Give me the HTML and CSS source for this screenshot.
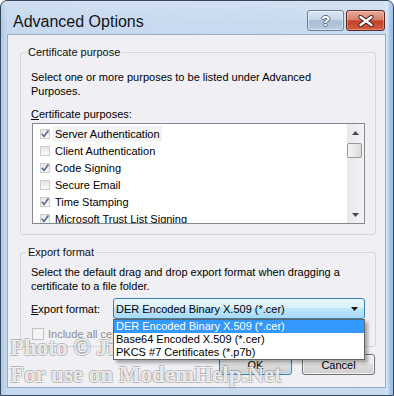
FILE: index.html
```html
<!DOCTYPE html>
<html>
<head>
<meta charset="utf-8">
<title>Advanced Options</title>
<link rel="stylesheet" href="styles.css">
</head>
<body>
<div class="window">
  <div class="titlebar">
    <div class="title">Advanced Options</div>
    <div class="caption-buttons">
      <div class="cap-btn help"><span class="help-glyph">?</span></div>
      <div class="cap-btn close">
        <svg width="16" height="12" viewBox="0 0 16 12"><path d="M2.5 2 L13.5 10 M13.5 2 L2.5 10" stroke="#3d1b15" stroke-width="4.2" stroke-linecap="round"/><path d="M2.5 2 L13.5 10 M13.5 2 L2.5 10" stroke="#ffffff" stroke-width="2.4" stroke-linecap="round"/></svg>
      </div>
    </div>
  </div>
  <div class="client">
    <fieldset class="group group-purpose">
      <legend>Certificate purpose</legend>
      <p class="desc">Select one or more purposes to be listed under Advanced<br>Purposes.</p>
      <div class="label"><u>C</u>ertificate purposes:</div>
      <div class="listbox">
        <ul class="items">
          <li class="item"><span class="cb"><svg width="10" height="10" viewBox="0 0 10 10"><path d="M1.8 4.8 L4 7.4 L8.4 1.6" fill="none" stroke="#566a8e" stroke-width="1.6"/></svg></span><span class="item-text focus">Server Authentication</span></li>
          <li class="item"><span class="cb"></span><span class="item-text">Client Authentication</span></li>
          <li class="item"><span class="cb"><svg width="10" height="10" viewBox="0 0 10 10"><path d="M1.8 4.8 L4 7.4 L8.4 1.6" fill="none" stroke="#566a8e" stroke-width="1.6"/></svg></span><span class="item-text">Code Signing</span></li>
          <li class="item"><span class="cb"></span><span class="item-text">Secure Email</span></li>
          <li class="item"><span class="cb"><svg width="10" height="10" viewBox="0 0 10 10"><path d="M1.8 4.8 L4 7.4 L8.4 1.6" fill="none" stroke="#566a8e" stroke-width="1.6"/></svg></span><span class="item-text">Time Stamping</span></li>
          <li class="item"><span class="cb"><svg width="10" height="10" viewBox="0 0 10 10"><path d="M1.8 4.8 L4 7.4 L8.4 1.6" fill="none" stroke="#566a8e" stroke-width="1.6"/></svg></span><span class="item-text">Microsoft Trust List Signing</span></li>
          <li class="item"><span class="cb"></span><span class="item-text">Encrypting File System</span></li>
        </ul>
        <div class="scrollbar">
          <div class="sb-btn"><svg width="7" height="4" viewBox="0 0 7 4"><path d="M0 4 L3.5 0 L7 4 Z" fill="#4a4a4a"/></svg></div>
          <div class="sb-track"><div class="sb-thumb"></div></div>
          <div class="sb-btn"><svg width="7" height="4" viewBox="0 0 7 4"><path d="M0 0 L7 0 L3.5 4 Z" fill="#4a4a4a"/></svg></div>
        </div>
      </div>
    </fieldset>
    <fieldset class="group group-export">
      <legend>Export format</legend>
      <p class="desc">Select the default drag and drop export format when dragging a<br>certificate to a file folder.</p>
      <div class="format-row">
        <span class="format-label"><u>E</u>xport format:</span>
        <div class="combo-wrap">
          <div class="combo">
            <span>DER Encoded Binary X.509 (*.cer)</span>
            <svg width="7" height="4" viewBox="0 0 7 4"><path d="M0 0 L7 0 L3.5 4 Z" fill="#111"/></svg>
          </div>
          <ul class="dropdown">
            <li class="sel">DER Encoded Binary X.509 (*.cer)</li>
            <li>Base64 Encoded X.509 (*.cer)</li>
            <li>PKCS #7 Certificates (*.p7b)</li>
          </ul>
        </div>
      </div>
      <div class="include-row"><span class="cb-disabled"></span><span>Include all certificates in the certification path if possible</span></div>
    </fieldset>
    <div class="buttons">
      <button class="btn default">OK</button>
      <button class="btn">Cancel</button>
    </div>
  </div>
  <div class="watermark">Photo © Jim<br>For use on ModemHelp.Net</div>
</div>
</body>
</html>
```

FILE: styles.css
```css
* { box-sizing: border-box; }
html, body { margin: 0; padding: 0; background: #ffffff; }
body {
  font-family: "Liberation Sans", Arial, sans-serif;
  font-size: 11px;
  color: #000;
}
.window {
  position: relative;
  width: 394px;
  height: 396px;
  border: 1px solid #34465c;
  border-radius: 7px 7px 0 0;
  background: linear-gradient(to right, #b0c8e2 0px, #c6d9ee 6px, #c9dbef 383px, #d4e4f5 386px, #a6c5e9 389px, #9cbce2 392px);
  display: flex;
  flex-direction: column;
  overflow: hidden;
}
.titlebar {
  flex: 0 0 33px;
  height: 33px;
  display: flex;
  justify-content: space-between;
  align-items: flex-start;
  padding: 0 8px 0 12px;
  background: linear-gradient(rgba(255,255,255,0.18), rgba(255,255,255,0) 70%);
}
.title {
  font-family: "Liberation Sans", Arial, sans-serif;
  font-size: 16px;
  line-height: 20px;
  margin-top: 11px;
  color: #141414;
}
.caption-buttons {
  display: flex;
  gap: 2px;
  margin-top: 9px;
}
.cap-btn {
  height: 21px;
  border-radius: 3px;
  display: flex;
  align-items: center;
  justify-content: center;
}
.help {
  width: 37px;
  border: 1px solid #6d7e92;
  background: linear-gradient(#dce7f3 0%, #c7d6e7 45%, #a9bed6 52%, #b9cce1 100%);
  box-shadow: inset 0 0 0 1px rgba(255,255,255,0.45);
}
.help-glyph {
  font-family: "Liberation Sans", Arial, sans-serif;
  font-weight: bold;
  font-size: 15px;
  line-height: 15px;
  color: #ffffff;
  text-shadow: 1px 0 0 #5d6c7e, -1px 0 0 #5d6c7e, 0 1px 0 #5d6c7e, 0 -1px 0 #5d6c7e;
}
.close {
  width: 39px;
  border: 1px solid #5a2a22;
  background: linear-gradient(#eaa999 0%, #d9826d 45%, #c2442c 52%, #d15a40 100%);
  box-shadow: inset 0 0 0 1px rgba(255,255,255,0.3);
}
.close svg { display: block; }

.client {
  flex: 1;
  margin: 0 7px 7px 6px;
  border: 1px solid #98acc3;
  background: #f0eff3;
  padding: 0 9px 0 12px;
  display: flex;
  flex-direction: column;
}
.group {
  margin: 10px 0 0 0;
  border: 1px solid #d3d7dd;
  border-radius: 3px;
  min-width: 0;
}
.group legend {
  padding: 0 2px;
  margin-left: -5px;
  line-height: 14px;
  color: #111;
}
.group-purpose { padding: 11px 10px 10px 10px; }
.group-export { padding: 6px 10px 5px 10px; }
.desc {
  margin: 0;
  line-height: 14px;
}
.label {
  margin-top: 9px;
  line-height: 14px;
}
.listbox {
  margin: 2px 0 0 1px;
  height: 101px;
  border: 1px solid #828790;
  background: #ffffff;
  display: flex;
}
.items {
  list-style: none;
  margin: 0;
  padding: 1px 0 0 7px;
  flex: 1;
  overflow: hidden;
}
.item {
  height: 17px;
  display: flex;
  align-items: center;
  white-space: nowrap;
}
.cb {
  width: 10px;
  height: 10px;
  flex: 0 0 10px;
  border: 1px solid #cdcdcd;
  background: linear-gradient(#e6e6e6, #fafafa);
  display: flex;
  align-items: center;
  justify-content: center;
}
.cb svg { display: block; flex: 0 0 10px; }
.item-text {
  margin-left: 3px;
  padding: 1px 2px;
  line-height: 14px;
}
.item-text.focus { background: #f3f3f4; }
.scrollbar {
  width: 17px;
  flex: 0 0 17px;
  display: flex;
  flex-direction: column;
  background: linear-gradient(to right, #e8e8ea, #f4f4f5);
}
.sb-btn {
  height: 17px;
  flex: 0 0 17px;
  display: flex;
  align-items: center;
  justify-content: center;
}
.sb-btn svg { display: block; }
.sb-track { flex: 1; padding-top: 2px; }
.sb-thumb {
  width: 15px;
  height: 15px;
  border: 1px solid #979797;
  border-radius: 2px;
  background: linear-gradient(to right, #f5f5f5, #dcdcdc);
}
.format-row {
  margin-top: 5px;
  display: flex;
  align-items: center;
}
.format-label {
  flex: 0 0 82px;
  line-height: 14px;
}
.combo-wrap {
  position: relative;
  flex: 0 0 252px;
  width: 252px;
}
.combo {
  height: 21px;
  border: 1px solid #3c7fb1;
  border-radius: 3px;
  background: linear-gradient(#eaf6fd 0%, #d9f0fc 49%, #bee6fd 50%, #a7d9f5 100%);
  padding: 0 6px 0 2px;
  display: flex;
  align-items: center;
  justify-content: space-between;
  white-space: nowrap;
}
.combo svg { display: block; }
.dropdown {
  position: absolute;
  left: 0;
  top: 100%;
  width: 252px;
  margin: 0;
  padding: 0;
  list-style: none;
  background: #ffffff;
  border: 1px solid #646464;
  box-shadow: 3px 3px 3px rgba(0,0,0,0.3);
  z-index: 10;
}
.dropdown li {
  height: 13px;
  line-height: 13px;
  padding-left: 2px;
  white-space: nowrap;
}
.dropdown li.sel {
  background: #3399ff;
  color: #ffffff;
}
.include-row {
  margin-top: 8px;
  height: 14px;
  display: flex;
  align-items: center;
  white-space: nowrap;
  overflow: hidden;
  color: #8e8e8e;
}
.cb-disabled {
  width: 12px;
  height: 12px;
  flex: 0 0 12px;
  margin: 0 4px 0 1px;
  border: 1px solid #c2c2c2;
  background: #f4f4f4;
}
.buttons {
  display: flex;
  justify-content: flex-end;
  gap: 10px;
  margin: 7px 1px 0 0;
}
.btn {
  width: 73px;
  height: 21px;
  padding: 0;
  border: 1px solid #707070;
  border-radius: 3px;
  background: linear-gradient(#f2f2f2 0%, #ebebeb 49%, #dddddd 50%, #cfcfcf 100%);
  box-shadow: inset 0 0 0 1px rgba(255,255,255,0.7);
  font-family: "Liberation Sans", Arial, sans-serif;
  font-size: 11px;
  color: #000;
}
.btn.default {
  border-color: #3c7fb1;
  box-shadow: inset 0 0 0 1px #bfe6f8;
}
.watermark {
  position: absolute;
  left: 9px;
  top: 333px;
  z-index: 5;
  font-family: "Liberation Serif", "Times New Roman", serif;
  font-weight: bold;
  font-size: 23px;
  line-height: 27px;
  white-space: nowrap;
  color: rgba(255,255,255,0.75);
  text-shadow: 1px 1px 0 rgba(120,120,120,0.3), -1px -1px 0 rgba(120,120,120,0.3), 1px -1px 0 rgba(120,120,120,0.3), -1px 1px 0 rgba(120,120,120,0.3);
  pointer-events: none;
}
```
